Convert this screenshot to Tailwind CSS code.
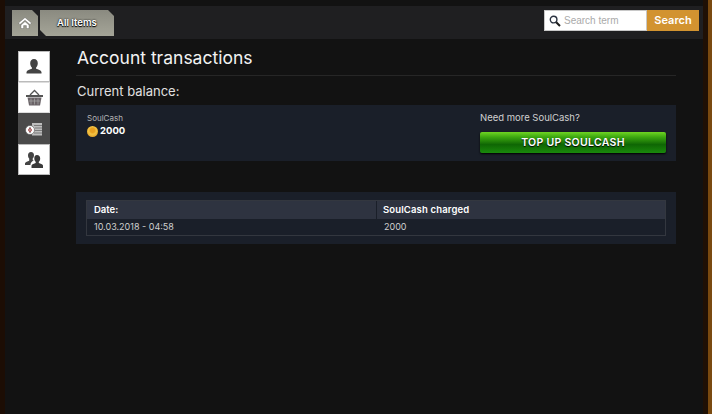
<!DOCTYPE html>
<html><head><meta charset="utf-8"><script src="https://cdn.jsdelivr.net/npm/@tailwindcss/browser@4"></script></head>
<body class="bg-[#121212] font-['Inter','Liberation_Sans',sans-serif]">
<div class="w-[712px] h-[414px] overflow-hidden flex bg-[#121212]">
  <div class="w-[5px] shrink-0 bg-[#1c0d04]"></div>
  <div class="w-[698px] shrink-0">
    <div class="mt-[6px] h-[33px] bg-[#1f1f21] flex items-start justify-between pt-[4px] pl-[7px] pr-[4px]">
      <div class="flex gap-[2px] h-[26px]">
        <div class="w-[26px] h-[26px] bg-[linear-gradient(180deg,#8a8a80,#a5a598)] [clip-path:polygon(0_0,20px_0,26px_6px,26px_26px,0_26px)] flex items-center justify-center">
          <svg width="14" height="12" viewBox="0 0 14 12"><path d="M7 0.5 L0.5 6 L2 7.5 L7 3.2 L12 7.5 L13.5 6Z" fill="#fff" stroke="#333" stroke-width=".3"/><path d="M3 8 L7 4.6 L11 8 V11.5 H8.400 V8.600 H5.600 V11.5 H3Z" fill="#fff" stroke="#333" stroke-width=".3"/></svg>
        </div>
        <div class="w-[74px] h-[26px] bg-[linear-gradient(180deg,#8a8a80,#a5a598)] [clip-path:polygon(0_0,68px_0,74px_6px,74px_26px,6px_26px,0_20px)] flex items-center pl-[17px] text-[9.500px] font-semibold text-white [text-shadow:0_0_2px_#000,0_1px_1px_#000]">All Items</div>
      </div>
      <div class="flex h-[21px]">
        <div class="w-[103px] bg-white border border-[#c8c8c8] flex items-center pl-[4px] gap-[3px]">
          <svg width="12" height="12" viewBox="0 0 12 12"><circle cx="4.600" cy="4.600" r="3.300" fill="none" stroke="#2c3442" stroke-width="1.400"/><path d="M7.200 7.200 L11 11" stroke="#1c1c1c" stroke-width="2"/></svg>
          <span class="text-[10px] text-[#aaa] font-['Liberation_Sans',sans-serif]">Search term</span>
        </div>
        <div class="w-[52px] bg-[#d29330] flex items-center justify-center text-[11px] font-semibold text-white">Search</div>
      </div>
    </div>
    <div class="flex pl-[13px] pt-[12px]">
      <div class="w-[32px] flex flex-col shrink-0">
        <div class="h-[31px] bg-white border border-[#bbb] flex items-center justify-center">
          <svg width="18" height="18" viewBox="0 0 18 18"><path d="M9 1c2.400 0 3.800 1.800 3.800 4.200 0 1.700-.8 3.300-1.700 4.200v1.400c2 .8 5 1.400 5.400 3.200v1.600H1.500V14c.4-1.800 3.400-2.400 5.400-3.200V9.400C6 8.500 5.200 6.900 5.200 5.200 5.200 2.800 6.600 1 9 1z" fill="#444"/></svg>
        </div>
        <div class="h-[31px] bg-white border border-[#ddd] flex items-center justify-center">
          <svg width="19" height="18" viewBox="0 0 19 18"><path d="M5 6 L9.500 1.500 L14 6" fill="none" stroke="#555" stroke-width="1.300"/><rect x="1" y="6" width="17" height="2" fill="#555"/><path d="M2.500 8.500 H16.500 L15 16.500 H4Z" fill="#6b6468"/><path d="M6 9.500V15.500M9.500 9.500V15.500M13 9.500V15.500M3.500 12H15.500" stroke="#aaa" stroke-width=".7"/></svg>
        </div>
        <div class="h-[31px] bg-[#4a4a4a] flex items-center justify-center">
          <svg width="18" height="14" viewBox="0 0 18 14"><rect x="7" y="1" width="10" height="12.500" fill="#bdbdbd"/><path d="M9 3.500H17M10 6H17M10 8.500H17M9 11H17" stroke="#6a6a6a" stroke-width=".8"/><circle cx="5" cy="8" r="4.500" fill="#fff" stroke="#4a4a4a" stroke-width=".6"/><path d="M5 5v6" stroke="#555" stroke-width="1"/><circle cx="5" cy="8" r="1.500" fill="none" stroke="#a33" stroke-width=".8"/></svg>
        </div>
        <div class="h-[31px] bg-white border border-[#bbb] flex items-center justify-center">
          <svg width="20" height="18" viewBox="0 0 20 18"><path d="M7 1c2 0 3 1.500 3 3.300 0 1.400-.6 2.500-1.300 3.300v1.200l1 .5c-1.500 1-3 2-3.200 4v.7H1v-1.700c.3-1.400 2.800-2 4.200-2.600V7.600C4.500 6.800 4 5.700 4 4.300 4 2.500 5 1 7 1z" fill="#444"/><path d="M13 4c2 0 3.200 1.500 3.200 3.400 0 1.400-.6 2.600-1.400 3.300v1.300c1.500.6 3.700 1.100 4.200 2.500V17H7.500v-2.500c.5-1.400 2.700-1.900 4.200-2.500v-1.300c-.8-.7-1.400-1.900-1.400-3.300C10.300 5.500 11 4 13 4z" fill="#3a3a3a"/></svg>
        </div>
      </div>
      <div class="ml-[26px] w-[600px]">
        <div class="h-[25px] flex border-b border-[#262626]"><h1 class="self-start mt-[-5px] pl-[1px] text-[17.500px] leading-[24px] font-normal text-[#f2f2f2]">Account transactions</h1></div>
        <p class="mt-[7px] pl-[1px] text-[13px] leading-[17px] text-[#e0e0e0]">Current balance:</p>
        <div class="mt-[5px] h-[56px] bg-[#1a1f29] flex justify-between pl-[11px] pr-[10px] pt-[7px]">
          <div>
            <div class="mt-[1px] text-[8px] leading-[10px] text-[#b5b5b5]">SoulCash</div>
            <div class="mt-[2px] flex items-center gap-[2px] text-[9.500px] leading-[12px] font-bold text-white">
              <span class="w-[11px] h-[11px] rounded-full bg-[radial-gradient(circle_at_50%_40%,#e8a020_25%,#f4c443_45%,#d48a17_100%)]"></span>2000
            </div>
          </div>
          <div class="w-[186px]">
            <div class="text-[9.500px] leading-[12px] text-[#d0d0d0]">Need more SoulCash?</div>
            <div class="mt-[8px] h-[21px] rounded-[2px] bg-[linear-gradient(180deg,#6fd423_0%,#3ba510_25%,#0f6604_60%,#1a8a0c_100%)] shadow-[0_1px_2px_#000] flex items-center justify-center text-[10.500px] font-semibold tracking-[0.3px] text-white [text-shadow:0_1px_1px_#000]">TOP UP SOULCASH</div>
          </div>
        </div>
        <div class="mt-[31px] bg-[#1a1f29] p-[8px_10px]">
          <div class="border border-[#33373f]">
            <div class="flex h-[18px] bg-[#2e3340] text-[9.500px] font-semibold text-white items-center">
              <div class="w-[290px] pl-[7px] border-r border-[#1a1f29] h-full flex items-center">Date:</div>
              <div class="pl-[6px] tracking-[0.15px]">SoulCash charged</div>
            </div>
            <div class="flex h-[16px] text-[9px] text-[#cfcfcf] items-center">
              <div class="w-[290px] pl-[7px]">10.03.2018 - 04:58</div>
              <div class="pl-[7px]">2000</div>
            </div>
          </div>
        </div>
      </div>
    </div>
  </div>
  <div class="w-[5px] shrink-0 bg-[#1f1005]"></div>
  <div class="flex-1 bg-[#7a4a10]"></div>
</div>
</body></html>
